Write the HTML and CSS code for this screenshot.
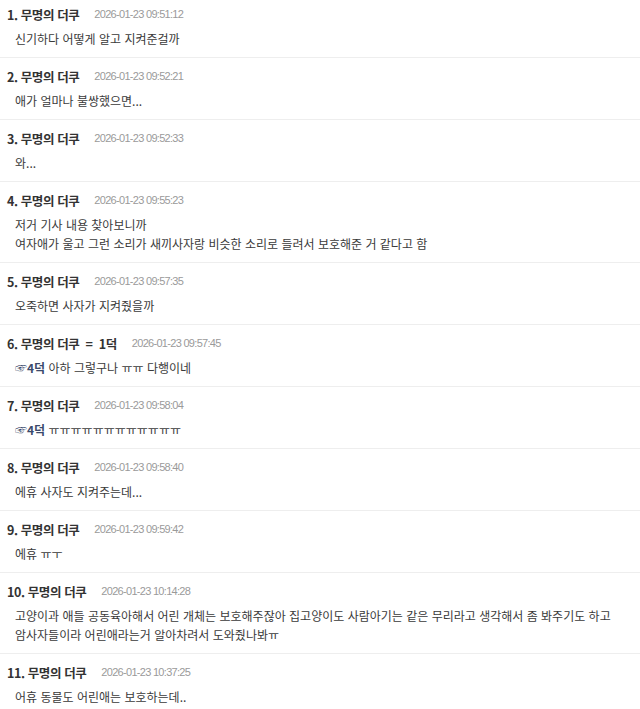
FILE: index.html
```html
<!DOCTYPE html>
<html lang="ko">
<head>
    <meta charset="UTF-8">
    <title>댓글</title>
    <link rel="stylesheet" href="styles.css">
</head>
<body>
    <!-- Comments -->
    <div class="comment-list">
        <div class="comment">
            <div class="comment-head"><span class="nick">1. 무명의 더쿠</span><span class="date">2026-01-23 09:51:12</span></div>
            <div class="comment-body">신기하다 어떻게 알고 지켜준걸까</div>
        </div>
        <div class="comment">
            <div class="comment-head"><span class="nick">2. 무명의 더쿠</span><span class="date">2026-01-23 09:52:21</span></div>
            <div class="comment-body">애가 얼마나 불쌍했으면...</div>
        </div>
        <div class="comment">
            <div class="comment-head"><span class="nick">3. 무명의 더쿠</span><span class="date">2026-01-23 09:52:33</span></div>
            <div class="comment-body">와...</div>
        </div>
        <div class="comment">
            <div class="comment-head"><span class="nick">4. 무명의 더쿠</span><span class="date">2026-01-23 09:55:23</span></div>
            <div class="comment-body">저거 기사 내용 찾아보니까<br>여자애가 울고 그런 소리가 새끼사자랑 비슷한 소리로 들려서 보호해준 거 같다고 함</div>
        </div>
        <div class="comment">
            <div class="comment-head"><span class="nick">5. 무명의 더쿠</span><span class="date">2026-01-23 09:57:35</span></div>
            <div class="comment-body">오죽하면 사자가 지켜줬을까</div>
        </div>
        <div class="comment">
            <div class="comment-head"><span class="nick">6. 무명의 더쿠 &nbsp;= &nbsp;1덕</span><span class="date">2026-01-23 09:57:45</span></div>
            <div class="comment-body"><span class="reply-to">☞4덕</span> 아하 그렇구나 ㅠㅠ 다행이네</div>
        </div>
        <div class="comment">
            <div class="comment-head"><span class="nick">7. 무명의 더쿠</span><span class="date">2026-01-23 09:58:04</span></div>
            <div class="comment-body"><span class="reply-to">☞4덕</span> ㅠㅠㅠㅠㅠㅠㅠㅠㅠㅠㅠㅠ</div>
        </div>
        <div class="comment">
            <div class="comment-head"><span class="nick">8. 무명의 더쿠</span><span class="date">2026-01-23 09:58:40</span></div>
            <div class="comment-body">에휴 사자도 지켜주는데...</div>
        </div>
        <div class="comment">
            <div class="comment-head"><span class="nick">9. 무명의 더쿠</span><span class="date">2026-01-23 09:59:42</span></div>
            <div class="comment-body">에휴 ㅠㅜ</div>
        </div>
        <div class="comment">
            <div class="comment-head"><span class="nick">10. 무명의 더쿠</span><span class="date">2026-01-23 10:14:28</span></div>
            <div class="comment-body">고양이과 애들 공동육아해서 어린 개체는 보호해주잖아 집고양이도 사람아기는 같은 무리라고 생각해서 좀 봐주기도 하고<br>암사자들이라 어린애라는거 알아차려서 도와줬나봐ㅠ</div>
        </div>
        <div class="comment">
            <div class="comment-head"><span class="nick">11. 무명의 더쿠</span><span class="date">2026-01-23 10:37:25</span></div>
            <div class="comment-body">어휴 동물도 어린애는 보호하는데..</div>
        </div>
    </div>
</body>
</html>
```

FILE: styles.css
```css
body {
    margin: 0;
    padding: 0;
    background-color: #fff;
    color: #333;
    font-family: "Noto Sans CJK KR", "Noto Sans", sans-serif;
    overflow: hidden;
}
.comment-list {
    margin-top: -4px;
}
.comment {
    padding: 8px 0 9px;
    border-bottom: 1px solid #eee;
}
.comment-head {
    display: flex;
    align-items: center;
    height: 20px;
    padding-left: 7px;
}
.nick {
    font-size: 12.5px;
    font-weight: bold;
    color: #333;
    letter-spacing: -0.4px;
}
.date {
    margin-left: 15px;
    font-family: "Liberation Sans", Arial, sans-serif;
    font-size: 11px;
    letter-spacing: -0.7px;
    color: #9a9a9a;
}
.comment-body {
    margin-top: 5px;
    padding-left: 15px;
    font-size: 12px;
    line-height: 19px;
    letter-spacing: 0;
    color: #3a3a3a;
    white-space: nowrap;
}
.reply-to {
    font-weight: bold;
    color: #3b4a6b;
}
```
